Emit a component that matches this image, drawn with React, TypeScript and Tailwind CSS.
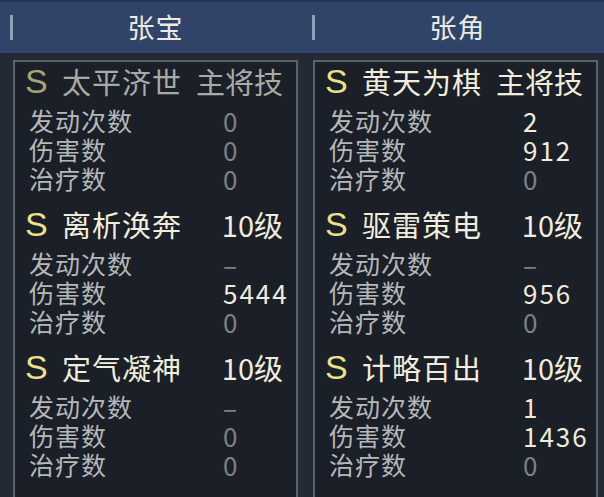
const font = { fontFamily: '"Noto Sans CJK SC", "Noto Sans", sans-serif' }

type Stat = { label: string; value: string; lit: boolean }
type Skill = { name: string; tag: string; active: boolean; stats: Stat[] }

const stat = (label: string, value: string): Stat => ({
  label,
  value,
  lit: value !== '0' && value !== '–',
})

const columns: { hero: string; skills: Skill[] }[] = [
  {
    hero: '张宝',
    skills: [
      { name: '太平济世', tag: '主将技', active: false, stats: [stat('发动次数', '0'), stat('伤害数', '0'), stat('治疗数', '0')] },
      { name: '离析涣奔', tag: '10级', active: true, stats: [stat('发动次数', '–'), stat('伤害数', '5444'), stat('治疗数', '0')] },
      { name: '定气凝神', tag: '10级', active: true, stats: [stat('发动次数', '–'), stat('伤害数', '0'), stat('治疗数', '0')] },
    ],
  },
  {
    hero: '张角',
    skills: [
      { name: '黄天为棋', tag: '主将技', active: true, stats: [stat('发动次数', '2'), stat('伤害数', '912'), stat('治疗数', '0')] },
      { name: '驱雷策电', tag: '10级', active: true, stats: [stat('发动次数', '–'), stat('伤害数', '956'), stat('治疗数', '0')] },
      { name: '计略百出', tag: '10级', active: true, stats: [stat('发动次数', '1'), stat('伤害数', '1436'), stat('治疗数', '0')] },
    ],
  },
]

function SkillBlock({ skill }: { skill: Skill }) {
  const titleColor = skill.active ? 'text-[#f1eddc]' : 'text-[#a9aaa6]'
  return (
    <div className="mb-[12px]">
      <div className="flex h-[38px] items-center">
        <span
          className={`w-[34px] pl-[10px] text-[34px] leading-none ${skill.active ? 'text-[#ebe08c]' : 'text-[#a9a673]'}`}
          style={{ fontFamily: '"Liberation Sans", sans-serif' }}
        >
          S
        </span>
        <span className={`ml-[13px] text-[29px] leading-none tracking-[1px] ${titleColor}`}>{skill.name}</span>
        <span className={`ml-auto pr-[13px] text-[29px] leading-none ${titleColor}`}>{skill.tag}</span>
      </div>
      <div className="mt-[6px]">
        {skill.stats.map((s) => (
          <div key={s.label} className="flex h-[29px] items-center text-[25px] leading-none">
            <span className="w-[194px] pl-[14px] tracking-[1px] text-[#b5b8bb]">{s.label}</span>
            <span className={`pl-[14px] text-[26px] tracking-[2px] ${s.lit ? 'text-[#efebde]' : 'text-[#7d8085]'}`}>
              {s.value}
            </span>
          </div>
        ))}
      </div>
    </div>
  )
}

export default function App() {
  return (
    <div className="h-[497px] w-[604px] overflow-hidden bg-[#232a35]" style={font}>
      <div className="flex h-[53px] border-t-2 border-[#263652] bg-[#2f4468]">
        {columns.map((col) => (
          <div key={col.hero} className="flex w-[302px] items-center">
            <div className="ml-[10px] h-[25px] w-[3px] bg-[#8fa0b5]" />
            <div className="flex-1 pr-[4px] text-center text-[27px] tracking-[1px] text-[#eceae2]">{col.hero}</div>
          </div>
        ))}
      </div>
      <div className="flex gap-[15px] pl-[13px] pt-[7px]">
        {columns.map((col) => (
          <div key={col.hero} className="h-[460px] w-[285px] border-2 border-[#5b626b] bg-[#1b1f27]">
            {col.skills.map((sk) => (
              <SkillBlock key={sk.name} skill={sk} />
            ))}
          </div>
        ))}
      </div>
    </div>
  )
}
